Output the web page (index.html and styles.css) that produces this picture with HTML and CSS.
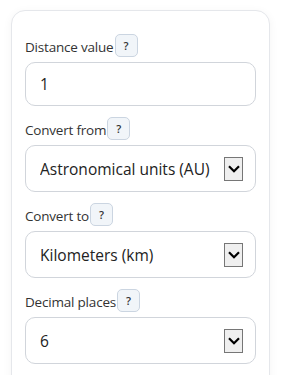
FILE: index.html
```html
<!DOCTYPE html>
<html lang="en">
<head>
    <meta charset="UTF-8">
    <meta name="viewport" content="width=device-width, initial-scale=1.0">
    <title>Distance Converter</title>
    <link rel="stylesheet" href="styles.css">
</head>
<body>
    <div class="card">
        <div class="field">
            <div class="label-row">
                <label for="distance">Distance value</label>
                <span class="help">?</span>
            </div>
            <input type="text" id="distance" class="control" value="1">
        </div>

        <div class="field">
            <div class="label-row">
                <label for="fromUnit">Convert from</label>
                <span class="help">?</span>
            </div>
            <div class="select-wrap">
                <select id="fromUnit" class="control select">
                    <option>Astronomical units (AU)</option>
                </select>
                <span class="arrow"><svg width="12" height="8" viewBox="0 0 12 8"><path d="M1 1.2l5 5 5-5" fill="none" stroke="#000" stroke-width="2.2"/></svg></span>
            </div>
        </div>

        <div class="field">
            <div class="label-row">
                <label for="toUnit">Convert to</label>
                <span class="help">?</span>
            </div>
            <div class="select-wrap">
                <select id="toUnit" class="control select">
                    <option>Kilometers (km)</option>
                </select>
                <span class="arrow"><svg width="12" height="8" viewBox="0 0 12 8"><path d="M1 1.2l5 5 5-5" fill="none" stroke="#000" stroke-width="2.2"/></svg></span>
            </div>
        </div>

        <div class="field">
            <div class="label-row">
                <label for="decimals">Decimal places</label>
                <span class="help">?</span>
            </div>
            <div class="select-wrap">
                <select id="decimals" class="control select">
                    <option>6</option>
                </select>
                <span class="arrow"><svg width="12" height="8" viewBox="0 0 12 8"><path d="M1 1.2l5 5 5-5" fill="none" stroke="#000" stroke-width="2.2"/></svg></span>
            </div>
        </div>

        <button class="convert">Convert</button>
    </div>
</body>
</html>
```

FILE: styles.css
```css
body {
    font-family: 'Open Sans', 'Liberation Sans', sans-serif;
    margin: 0;
    padding: 10px 11px;
    background-color: #fff;
    color: #333;
}
.card {
    border: 1px solid #e5e7eb;
    border-radius: 14px;
    padding: 23px 13px 20px;
    background-color: #fff;
    box-shadow: 0 2px 10px rgba(0,0,0,0.05);
}
.field {
    margin-bottom: 11px;
}
.label-row {
    display: flex;
    align-items: center;
    height: 22px;
    margin-bottom: 6px;
}
.label-row label {
    font-size: 13.5px;
    letter-spacing: -0.2px;
    color: #333;
    padding-top: 3px;
}
.help {
    display: flex;
    align-items: center;
    justify-content: center;
    width: 21px;
    height: 21px;
    margin-left: 1px;
    border: 1px solid #cbd5e1;
    border-radius: 5px;
    background-color: #f1f5f9;
    font-size: 11px;
    font-weight: 600;
    color: #333;
}
.control {
    display: block;
    box-sizing: border-box;
    width: 100%;
    height: 44px;
    padding: 0 14px;
    border: 1px solid #d1d5db;
    border-radius: 10px;
    background-color: #fff;
    font-family: inherit;
    font-size: 15.5px;
    color: #222;
    outline: none;
}
.select-wrap {
    position: relative;
}
.select {
    height: 47px;
    appearance: none;
    -webkit-appearance: none;
}
.arrow {
    position: absolute;
    right: 13px;
    top: 12px;
    box-sizing: border-box;
    width: 19px;
    height: 24px;
    border: 1px solid #767676;
    background-color: #efefef;
    display: flex;
    align-items: center;
    justify-content: center;
    pointer-events: none;
}
.convert {
    display: block;
    width: calc(100% - 16px);
    margin: 10px 8px 0;
    height: 48px;
    border: none;
    border-radius: 8px;
    background-color: #1fb58f;
    color: white;
    font-family: inherit;
    font-size: 16px;
    font-weight: 600;
}
```
